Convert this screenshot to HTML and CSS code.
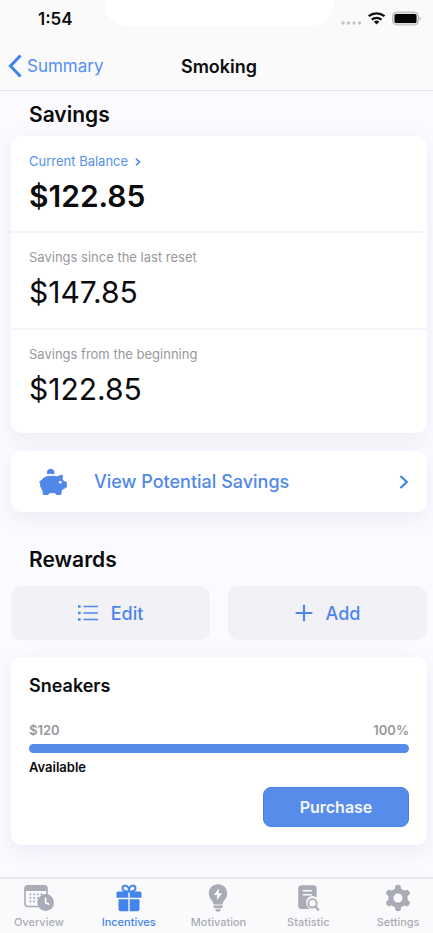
FILE: index.html
```html
<!DOCTYPE html>
<html lang="en">
<head>
<meta charset="utf-8">
<meta name="viewport" content="width=device-width, initial-scale=1">
<title>Smoking</title>
<link rel="stylesheet" href="styles.css">
</head>
<body>
<div class="app">
  <header class="header">
    <div class="status">
      <span class="clock">1:54</span>
      <span class="notch"></span>
      <svg class="status-icons" width="80" height="18" viewBox="0 0 80 18" aria-hidden="true">
        <g fill="#c4c4c6"><circle cx="2" cy="13" r="1.700"/><circle cx="7.500" cy="13" r="1.700"/><circle cx="13" cy="13" r="1.700"/><circle cx="18.500" cy="13" r="1.700"/></g>
        <g fill="none" stroke="#111" stroke-width="2.300"><path d="M27.700 6.200a12.300 12.300 0 0 1 15.800 0M30.700 9.700a7.800 7.800 0 0 1 9.800 0"/></g>
        <path d="M32.900 11.700a4.200 4.200 0 0 1 5.400 0L35.600 14.600z" fill="#111"/>
        <rect x="51.500" y="2" width="26" height="13" rx="4" fill="#ddd" stroke="#bcbcbe"/>
        <rect x="53.500" y="4" width="22" height="9" rx="1.500" fill="#050505"/>
        <path d="M78.500 6.500c1.500.4 1.500 3.600 0 4z" fill="#b5b5b7"/>
      </svg>
    </div>
    <nav class="navbar">
      <a class="back" href="#summary">
        <svg width="14" height="24" viewBox="0 0 14 24" fill="none" stroke="#3d82f0" stroke-width="3" aria-hidden="true"><path d="M12.500 1.500 2.500 12l10 10.500"/></svg>
        Summary
      </a>
      <h1 class="title">Smoking</h1>
    </nav>
  </header>

  <main class="content">
    <h2 class="section">Savings</h2>
    <section class="card balances">
      <div class="amount-row">
        <a class="label link" href="#balance">Current Balance
          <svg width="6" height="8" viewBox="0 0 6 8" fill="none" stroke="#4a88ec" stroke-width="1.600" aria-hidden="true"><path d="M1 .8 4.500 4 1 7.200"/></svg>
        </a>
        <p class="amount strong">$122.85</p>
      </div>
      <div class="amount-row">
        <p class="label">Savings since the last reset</p>
        <p class="amount">$147.85</p>
      </div>
      <div class="amount-row">
        <p class="label">Savings from the beginning</p>
        <p class="amount">$122.85</p>
      </div>
    </section>

    <a class="card potential" href="#potential">
      <svg width="28" height="28" viewBox="0 0 28 28" fill="#5088e9" aria-hidden="true">
        <path d="M8.300 6.300a3.800 3.800 0 1 1 6.800 0q-3.400-.9-6.800 0z"/>
        <path stroke="#5088e9" stroke-linejoin="round" d="M4 10.800C7 8 12.500 7.500 18 9q2.500-1.600 5.500-1.700L23 11l1.800 2.500 2.500.8v5l-3 1.300-2 2-.5 3.900h-4.500l-.8-1.800H10l-.8 1.800H4.500L3.700 22.300Q1.500 19.500 1.500 16L.8 13.500 2.200 13z"/>
        <circle cx="21.200" cy="14.200" r="1.300" fill="#fff"/>
      </svg>
      <span class="potential-text">View Potential Savings</span>
      <svg width="10" height="14" viewBox="0 0 10 14" fill="none" stroke="#3e82ee" stroke-width="2.200" aria-hidden="true"><path d="M1.500 1 7.800 7l-6.300 6"/></svg>
    </a>

    <h2 class="section rewards">Rewards</h2>
    <div class="actions">
      <button class="action" type="button">
        <svg width="20" height="16" viewBox="0 0 20 16" stroke="#4a88ec" fill="#4a88ec" aria-hidden="true"><path d="M5.500 1.500H20M5.500 8H20M5.500 14.500H20" stroke-width="1.600"/><path stroke="none" d="M0 .2h2.600v2.600H0zM0 6.700h2.600v2.600H0zM0 13.200h2.600v2.600H0z"/></svg>
        Edit
      </button>
      <button class="action" type="button">
        <svg width="18" height="18" viewBox="0 0 18 18" stroke="#4a88ec" stroke-width="2.200" stroke-linecap="round" aria-hidden="true"><path d="M9 1.500v15M1.500 9h15"/></svg>
        Add
      </button>
    </div>

    <section class="card reward">
      <h3 class="reward-name">Sneakers</h3>
      <div class="reward-meta"><span>$120</span><span>100%</span></div>
      <div class="bar"><div class="bar-fill" style="width: 100%"></div></div>
      <p class="reward-state">Available</p>
      <button class="purchase" type="button">Purchase</button>
    </section>
  </main>

  <footer class="footer">
    <nav class="tabs">
      <a class="tab" href="#overview">
        <svg width="32" height="28" viewBox="0 0 32 28" aria-hidden="true">
          <path d="M2 6V19.500Q2 22.500 5 22.500H15M24 6v6" fill="none" stroke="#a9acb6" stroke-width="1.600"/>
          <path d="M1.200 7V4.500Q1.200 1 4.700 1H21.300Q24.800 1 24.800 4.500V7z" fill="#a9acb6"/>
          <path d="M6.500 10.400h13M6.500 13.900h9M6.500 17.400h7" stroke="#a9acb6" stroke-width="1.800" stroke-dasharray="1.800 1.900"/>
          <circle cx="22.600" cy="18.500" r="8.400" fill="#a9acb6"/>
          <path d="M22.600 13.500v5.200l3.700 1.800" fill="none" stroke="#fff" stroke-width="1.600"/>
        </svg>
        Overview
      </a>
      <a class="tab active" href="#incentives" aria-current="page">
        <svg width="28" height="28" viewBox="0 0 28 28" fill="#4384ed" aria-hidden="true">
          <path d="M14 7.500C11 7.500 7.500 7 7.500 4.200 7.500.500 13.500.300 14 6.500 14.500.300 20.500.500 20.500 4.200 20.500 7 17 7.500 14 7.500z" fill="none" stroke="#4384ed" stroke-width="2"/>
          <path d="M3 7.500h10.300v6.300H1.500V9Q1.500 7.500 3 7.500zM14.700 7.500H25q1.500 0 1.500 1.500v4.800H14.700zM3.500 15.300h9.800v12H5.500q-2 0-2-2zM14.700 15.300h9.800v10q0 2-2 2h-7.800z"/>
        </svg>
        Incentives
      </a>
      <a class="tab" href="#motivation">
        <svg width="28" height="28" viewBox="0 0 28 28" aria-hidden="true">
          <path d="M14 .3c-5.300 0-9.200 3.900-9.200 8.900 0 5.600 4.300 7.100 4.700 11.300h9c.4-4.200 4.700-5.700 4.700-11.300C23.200 4.200 19.300.3 14 .3z" fill="#a9acb6"/>
          <path d="M15 4.200 10 11h3.300l-.5 5.200 5.200-7h-3.500z" fill="#fff"/>
          <path d="M9.300 21.500h9.400v1q0 1.700-1.700 1.700h-6q-1.700 0-1.700-1.700zM11 25.200h6q-.6 2.500-3 2.500t-3-2.500z" fill="#a9acb6"/>
        </svg>
        Motivation
      </a>
      <a class="tab" href="#statistic">
        <svg width="28" height="28" viewBox="0 0 28 28" aria-hidden="true">
          <path d="M7.500 1.200h12q3.200 0 3.200 3.200v9.200a6.300 6.300 0 0 0-8.400 9.800l1.500 1.600H7.300q-3.100 0-3.100-3V4.500q0-3.300 3.300-3.300z" fill="#a9acb6"/>
          <path d="M8.800 6.800h9M8.800 10.800h9" stroke="#fff" stroke-width="1.500"/>
          <circle cx="18.500" cy="19.300" r="4.200" fill="none" stroke="#a9acb6" stroke-width="1.800"/>
          <path d="m21.500 22.500 3.300 4" stroke="#a9acb6" stroke-width="2.200"/>
        </svg>
        Statistic
      </a>
      <a class="tab" href="#settings">
        <svg width="28" height="28" viewBox="0 0 28 28" aria-hidden="true">
          <circle cx="14" cy="14" r="9.800" fill="#a9acb6"/>
          <path d="M14 3.800v20.400M5.200 8.900l17.600 10.200M22.800 8.900 5.200 19.100" stroke="#a9acb6" stroke-width="6" stroke-linecap="round"/>
          <circle cx="14" cy="14" r="4.500" fill="#fafafc"/>
        </svg>
        Settings
      </a>
    </nav>
  </footer>
</div>
</body>
</html>
```
FILE: styles.css
```css
* {
  box-sizing: border-box;
}

body {
  margin: 0;
  background: #fafaff;
  color: #0c0c0e;
  font-family: Inter, Roboto, "Liberation Sans", sans-serif;
}

h1, h2, h3, p {
  margin: 0;
}

a {
  color: inherit;
  text-decoration: none;
}

button {
  border: 0;
  font: inherit;
}

svg {
  flex: none;
}

.app {
  display: flex;
  flex-direction: column;
  min-height: 100vh;
  overflow: hidden;
}

.header {
  border-bottom: 1px solid #e2e2e4;
  background: #fafafa;
}

.status {
  display: grid;
  grid-template-columns: 105px 1fr 100px;
  height: 42px;
}

.clock {
  padding: 8px 0 0 38px;
  font-size: 17px;
  line-height: 22px;
  font-weight: 600;
}

.notch {
  height: 26px;
  border-radius: 0 0 22px 22px;
  background: #fff;
}

.status-icons {
  margin: 10px 0 0 8px;
}

.navbar {
  display: grid;
  grid-template-columns: 1fr auto 1fr;
  align-items: center;
  height: 48px;
  padding: 0 3px 0 8px;
}

.back {
  display: flex;
  align-items: center;
  gap: 5px;
  color: #5590ee;
  font-size: 17px;
}

.title {
  font-size: 18px;
  font-weight: 600;
}

.content {
  flex: 1;
  padding: 11px 6px 32px 11px;
}

.section {
  padding-left: 18px;
  font-size: 21px;
  line-height: 26px;
  font-weight: 600;
}

.card {
  display: block;
  border-radius: 10px;
  background: #fff;
  box-shadow: 0 6px 20px rgba(60, 70, 120, 0.08);
}

.balances {
  margin-top: 8px;
  padding-bottom: 8px;
}

.amount-row {
  height: 95px;
  padding: 17px 18px 0;
}

.amount-row + .amount-row {
  height: 97px;
  padding-top: 16px;
  border-top: 2px solid #f5f5f7;
}

.label {
  display: block;
  color: #98989c;
  font-size: 13px;
  line-height: 16px;
}

.link {
  color: #5590ee;
}

.link svg {
  margin-left: 3px;
}

.amount {
  margin-top: 9px;
  font-size: 30px;
  line-height: 36px;
}

.strong {
  font-weight: 600;
}

.potential {
  display: flex;
  align-items: center;
  height: 61px;
  margin-top: 18px;
  padding: 0 18px 0 28px;
  color: #5088ea;
  font-size: 18px;
  font-weight: 500;
}

.potential-text {
  flex: 1;
  padding-left: 27px;
}

.rewards {
  margin-top: 35px;
}

.actions {
  display: grid;
  grid-template-columns: 1fr 1fr;
  gap: 18px;
  margin-top: 13px;
}

.action {
  display: flex;
  align-items: center;
  justify-content: center;
  gap: 13px;
  height: 54px;
  border-radius: 10px;
  background: #f2f2f6;
  color: #4c86ea;
  font-size: 18px;
  font-weight: 500;
}

.reward {
  display: flex;
  flex-direction: column;
  margin-top: 17px;
  padding: 17px 18px 18px;
}

.reward-name {
  font-size: 18px;
  line-height: 24px;
  font-weight: 600;
}

.reward-meta {
  display: flex;
  justify-content: space-between;
  margin-top: 24px;
  color: #98989c;
  font-size: 13px;
  line-height: 16px;
  font-weight: 600;
}

.bar {
  height: 9px;
  margin-top: 6px;
  border-radius: 5px;
  background: #e6ebf5;
}

.bar-fill {
  height: 100%;
  border-radius: inherit;
  background: #568be9;
}

.reward-state {
  margin-top: 6px;
  font-size: 13px;
  line-height: 16px;
  font-weight: 600;
}

.purchase {
  align-self: flex-end;
  width: 146px;
  height: 40px;
  margin-top: 12px;
  border: 1px solid #4280ea;
  border-radius: 8px;
  background: #588ceb;
  color: #f4f8ff;
  font-size: 16px;
  font-weight: 600;
}

.footer {
  height: 56px;
  border-top: 2px solid #e9e9ec;
  background: #fafafc;
}

.tabs {
  display: grid;
  grid-template-columns: repeat(5, 1fr);
  margin: 0 -10px 0 -6px;
  padding-top: 5px;
}

.tab {
  display: flex;
  flex-direction: column;
  align-items: center;
  gap: 3px;
  color: #a9acb6;
  font-size: 11px;
  line-height: 14px;
  font-weight: 500;
}

.active {
  color: #4384ed;
}
```
